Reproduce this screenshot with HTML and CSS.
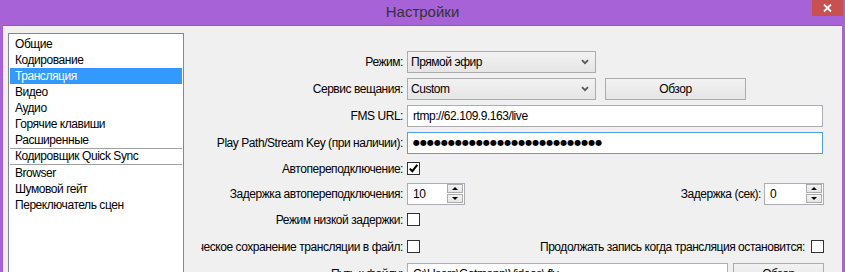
FILE: index.html
```html
<!DOCTYPE html>
<html lang="ru">
<head>
    <meta charset="UTF-8">
    <meta name="viewport" content="width=device-width, initial-scale=1.0">
    <title>Настройки</title>
    <link rel="stylesheet" href="styles.css">
</head>
<body>
    <div class="titlebar">
        <span></span>
        <span class="title">Настройки</span>
        <span class="close">
            <svg width="9" height="8" viewBox="0 0 9 8"><path d="M1 0.5 L8 7.5 M8 0.5 L1 7.5" stroke="#fff" stroke-width="1.8" fill="none"/></svg>
        </span>
    </div>

    <div class="window">
        <!-- список разделов -->
        <div class="sidebar">
            <div class="nav-item">Общие</div>
            <div class="nav-item">Кодирование</div>
            <div class="nav-item active">Трансляция</div>
            <div class="nav-item">Видео</div>
            <div class="nav-item">Аудио</div>
            <div class="nav-item">Горячие клавиши</div>
            <div class="nav-item">Расширенные</div>
            <div class="nav-sep"></div>
            <div class="nav-item nav-plugin">Кодировщик Quick Sync</div>
            <div class="nav-sep"></div>
            <div class="nav-item">Browser</div>
            <div class="nav-item">Шумовой гейт</div>
            <div class="nav-item">Переключатель сцен</div>
        </div>

        <!-- настройки трансляции -->
        <div class="form">
            <div class="row">
                <div class="label">Режим:</div>
                <div class="combo">
                    <span>Прямой эфир</span>
                    <svg class="chevron" width="8" height="6" viewBox="0 0 8 6"><path d="M1 1.2 L4 4.2 L7 1.2" stroke="#555" stroke-width="1.7" fill="none"/></svg>
                </div>
            </div>
            <div class="row">
                <div class="label">Сервис вещания:</div>
                <div class="combo">
                    <span>Custom</span>
                    <svg class="chevron" width="8" height="6" viewBox="0 0 8 6"><path d="M1 1.2 L4 4.2 L7 1.2" stroke="#555" stroke-width="1.7" fill="none"/></svg>
                </div>
                <div class="button">Обзор</div>
            </div>
            <div class="row">
                <div class="label">FMS URL:</div>
                <div class="input">rtmp://62.109.9.163/live</div>
            </div>
            <div class="row">
                <div class="label">Play Path/Stream Key (при наличии):</div>
                <div class="input focused"><span class="dots">●●●●●●●●●●●●●●●●●●●●●●●●●●●</span></div>
            </div>
            <div class="row row-tight">
                <div class="label">Автопереподключение:</div>
                <div class="check">
                    <svg width="11" height="11" viewBox="0 0 11 11"><path d="M1.8 5.6 L4.3 8.2 L9.3 1.8" stroke="#000" stroke-width="2" fill="none"/></svg>
                </div>
            </div>
            <div class="row row-tight">
                <div class="label">Задержка автопереподключения:</div>
                <div class="spin">
                    <span class="spin-value">10</span>
                    <div class="spin-buttons">
                        <div class="spin-btn"><span class="arrow-up"></span></div>
                        <div class="spin-btn"><span class="arrow-down"></span></div>
                    </div>
                </div>
                <div class="spacer"></div>
                <div class="label-right">Задержка (сек):</div>
                <div class="spin spin-wide">
                    <span class="spin-value">0</span>
                    <div class="spin-buttons">
                        <div class="spin-btn"><span class="arrow-up"></span></div>
                        <div class="spin-btn"><span class="arrow-down"></span></div>
                    </div>
                </div>
            </div>
            <div class="row">
                <div class="label">Режим низкой задержки:</div>
                <div class="check"></div>
            </div>
            <div class="row">
                <div class="label">Автоматическое сохранение трансляции в файл:</div>
                <div class="check"></div>
                <div class="spacer"></div>
                <div class="label-right label-check">Продолжать запись когда трансляция остановится:</div>
                <div class="check"></div>
            </div>
            <div class="row">
                <div class="label">Путь к файлу:</div>
                <div class="input input-path">C:\Users\Gotmann\Videos\.flv</div>
                <div class="button button-small">Обзор</div>
            </div>
        </div>
    </div>
</body>
</html>
```

FILE: styles.css
```css
body {
    font-family: 'Liberation Sans', Arial, sans-serif;
    font-size: 12px;
    letter-spacing: -0.45px;
    color: #000;
    margin: 0;
    background-color: #a862d8;
    height: 272px;
    overflow: hidden;
}
.titlebar {
    display: grid;
    grid-template-columns: 1fr auto 1fr;
    height: 25px;
}
.title {
    font-size: 15px;
    letter-spacing: 0;
    color: #333;
    line-height: 24px;
}
.close {
    justify-self: end;
    width: 31px;
    height: 16px;
    margin-right: 2px;
    background-color: #c75050;
    display: flex;
    justify-content: center;
    align-items: center;
}
.window {
    display: flex;
    margin: 0 3px;
    padding: 7px 19px 0 5px;
    background-color: #f0f0f0;
    border-top: 1px solid #9a52ca;
    height: 260px;
}
.sidebar {
    flex: none;
    width: 176px;
    height: 270px;
    box-sizing: border-box;
    border: 1px solid #828790;
    background-color: #fff;
    padding: 2px 1px 1px;
}
.nav-item {
    height: 16px;
    line-height: 16px;
    padding-left: 5px;
    white-space: nowrap;
}
.nav-item.active {
    background-color: #3399ff;
    color: #fff;
}
.nav-plugin {
    height: 15px;
    line-height: 15px;
}
.nav-sep {
    height: 1px;
    background-color: #a0a0a0;
}
.form {
    flex: 1;
    margin-left: 17px;
    padding-top: 15px;
    display: flex;
    flex-direction: column;
}
.row {
    display: flex;
    align-items: center;
    height: 27px;
    flex: none;
}
.row-tight {
    height: 25px;
}
.label {
    flex: none;
    width: 202px;
    margin-right: 4px;
    display: flex;
    justify-content: flex-end;
    overflow: hidden;
    white-space: nowrap;
}
.label-right {
    white-space: nowrap;
    margin-right: 3px;
}
.label-check {
    margin-right: 6px;
}
.spacer {
    flex: 1;
}
.combo {
    width: 189px;
    height: 22px;
    box-sizing: border-box;
    border: 1px solid #acacac;
    background: linear-gradient(#f2f2f2, #e5e5e5);
    display: flex;
    align-items: center;
    justify-content: space-between;
    padding: 0 6px 0 3px;
}
.button {
    width: 141px;
    height: 22px;
    box-sizing: border-box;
    margin-left: 9px;
    border: 1px solid #acacac;
    background: linear-gradient(#f2f2f2, #e5e5e5);
    display: flex;
    align-items: center;
    justify-content: center;
}
.button-small {
    width: 91px;
    margin-left: 5px;
}
.input {
    width: 416px;
    height: 22px;
    box-sizing: border-box;
    border: 1px solid #abadb3;
    background-color: #fff;
    padding-left: 5px;
    display: flex;
    align-items: center;
    white-space: nowrap;
    overflow: hidden;
}
.input.focused {
    border-color: #569de5;
}
.input-path {
    width: 321px;
}
.dots {
    font-family: 'DejaVu Sans', sans-serif;
    font-size: 8px;
    letter-spacing: 0.03px;
}
.check {
    width: 13px;
    height: 13px;
    box-sizing: border-box;
    border: 1px solid #333;
    background-color: #fff;
    display: flex;
    align-items: center;
    justify-content: center;
}
.spin {
    width: 58px;
    height: 22px;
    box-sizing: border-box;
    border: 1px solid #abadb3;
    background-color: #fff;
    display: flex;
    align-items: center;
    justify-content: space-between;
    padding-left: 5px;
}
.spin-wide {
    width: 60px;
}
.spin-buttons {
    display: flex;
    flex-direction: column;
    gap: 1px;
    margin-right: 1px;
}
.spin-btn {
    width: 16px;
    height: 9px;
    box-sizing: border-box;
    border: 1px solid #acacac;
    background: linear-gradient(#f2f2f2, #e5e5e5);
    display: flex;
    align-items: center;
    justify-content: center;
}
.arrow-up {
    width: 0;
    height: 0;
    border-left: 3px solid transparent;
    border-right: 3px solid transparent;
    border-bottom: 3px solid #000;
}
.arrow-down {
    width: 0;
    height: 0;
    border-left: 3px solid transparent;
    border-right: 3px solid transparent;
    border-top: 3px solid #000;
}
```
